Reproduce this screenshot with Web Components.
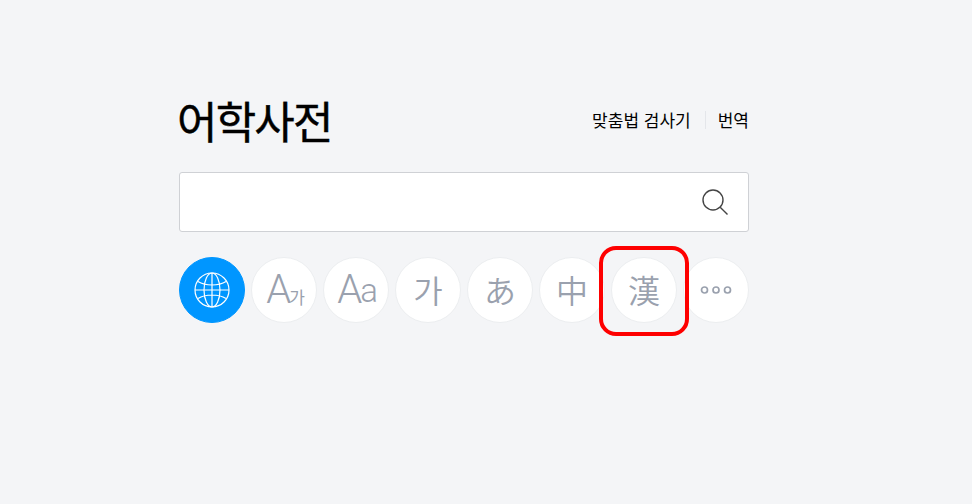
<!DOCTYPE html>
<html lang="ko">
<head>
<meta charset="utf-8">
<title>어학사전</title>
<style>
  html, body { margin: 0; height: 100%; background: #f4f5f7; }
  body { font-family: "Noto Sans CJK KR", "Noto Sans", sans-serif; }
</style>
</head>
<body>
<dict-page>
  <dict-header slot="header">
    <span slot="title">어학사전</span>
    <a slot="links">맞춤법 검사기</a>
    <a slot="links">번역</a>
  </dict-header>
  <dict-search slot="search"></dict-search>
  <dict-tabs slot="tabs">
    <dict-tab active>
      <svg viewBox="0 0 36 36" width="36" height="36" fill="none" stroke="#fff" stroke-width="1.2">
        <circle cx="18" cy="18" r="17"/>
        <ellipse cx="18" cy="18" rx="8" ry="17"/>
        <path d="M18 1v34M1 18h34M4 9.500c4 2.500 9 3.500 14 3.500s10-1 14-3.500M4 26.500c4-2.500 9-3.500 14-3.500s10 1 14 3.500"/>
      </svg>
    </dict-tab>
    <dict-tab><span class="big">A</span><span class="small">가</span></dict-tab>
    <dict-tab><span class="big">A</span><span class="mid">a</span></dict-tab>
    <dict-tab class="thin">가</dict-tab>
    <dict-tab class="thin">あ</dict-tab>
    <dict-tab class="thin">中</dict-tab>
    <dict-tab class="thin" highlighted>漢</dict-tab>
    <dict-tab>
      <svg viewBox="0 0 32 10" width="32" height="10" fill="none" stroke="#9aa1ae" stroke-width="1.7">
        <circle cx="4.500" cy="5" r="3"/><circle cx="16" cy="5" r="3"/><circle cx="27.500" cy="5" r="3"/>
      </svg>
    </dict-tab>
  </dict-tabs>
</dict-page>

<script>
class DictPage extends HTMLElement {
  constructor() {
    super();
    this.attachShadow({ mode: "open" }).innerHTML = `
      <style>
        :host { display: flex; flex-direction: column; width: 570px; padding: 88px 0 0 179px; }
        .search { margin-top: 20px; }
        .tabs { margin-top: 25px; }
      </style>
      <slot name="header"></slot>
      <div class="search"><slot name="search"></slot></div>
      <div class="tabs"><slot name="tabs"></slot></div>
    `;
  }
}

class DictHeader extends HTMLElement {
  constructor() {
    super();
    this.attachShadow({ mode: "open" }).innerHTML = `
      <style>
        :host { display: flex; justify-content: space-between; align-items: center; height: 64px; }
        .title { font-size: 44px; line-height: 64px; font-weight: 400; letter-spacing: -1.800px; color: #000; margin-left: -2px; -webkit-text-stroke: 0.4px #000; }
        .links { display: flex; align-items: center; font-size: 17px; color: #000; }
        ::slotted(a) { line-height: 18px; }
        ::slotted(a:first-of-type) { padding-right: 14px; margin-right: 12px; border-right: 1px solid #e4e6ea; }
      </style>
      <div class="title"><slot name="title"></slot></div>
      <div class="links"><slot name="links"></slot></div>
    `;
  }
}

class DictSearch extends HTMLElement {
  constructor() {
    super();
    this.attachShadow({ mode: "open" }).innerHTML = `
      <style>
        :host { display: flex; align-items: center; height: 58px; background: #fff; border: 1px solid #cfd1d5; border-radius: 3px; padding-right: 19px; }
        input { flex: 1; min-width: 0; height: 100%; border: 0; outline: 0; background: none; padding: 0 20px; font: inherit; }
        svg { display: block; }
      </style>
      <input type="text" aria-label="검색">
      <svg viewBox="0 0 28 28" width="28" height="28" fill="none" stroke="#444" stroke-width="1.4">
        <circle cx="12" cy="12" r="10"/>
        <path d="M19.2 19.2 26.5 26.5"/>
      </svg>
    `;
  }
}

class DictTabs extends HTMLElement {
  constructor() {
    super();
    this.attachShadow({ mode: "open" }).innerHTML = `
      <style>
        :host { display: flex; gap: 6px; }
      </style>
      <slot></slot>
    `;
  }
}

class DictTab extends HTMLElement {
  constructor() {
    super();
    this.attachShadow({ mode: "open" }).innerHTML = `
      <style>
        :host { position: relative; display: flex; align-items: center; justify-content: center; box-sizing: border-box; width: 66px; height: 66px; border-radius: 50%; background: #fff; border: 1px solid #eceef0; color: #9aa1ae; font-size: 32px; line-height: 1; }
        :host(.thin) { font-weight: 350; padding-bottom: 3px; }
        :host([active]) { background: #0096ff; border-color: #0096ff; }
        :host([highlighted]) { z-index: 1; background: #fff; }
        :host([highlighted])::after { content: ""; position: absolute; left: -13px; top: -12px; width: 82px; height: 82px; border: 4px solid #fe0000; border-radius: 17px; }
        ::slotted(.big) { font-size: 40px; font-family: Roboto, sans-serif; font-weight: 300; margin-left: 3px; }
        ::slotted(.small) { font-size: 17px; align-self: flex-end; margin-bottom: 17px; margin-left: -2px; font-weight: 400; }
        ::slotted(.mid) { font-size: 33px; font-family: Roboto, sans-serif; font-weight: 300; align-self: flex-end; margin-bottom: 15px; margin-left: -2px; }
      </style>
      <slot></slot>
    `;
  }
}

customElements.define("dict-page", DictPage);
customElements.define("dict-header", DictHeader);
customElements.define("dict-search", DictSearch);
customElements.define("dict-tabs", DictTabs);
customElements.define("dict-tab", DictTab);
</script>
</body>
</html>
